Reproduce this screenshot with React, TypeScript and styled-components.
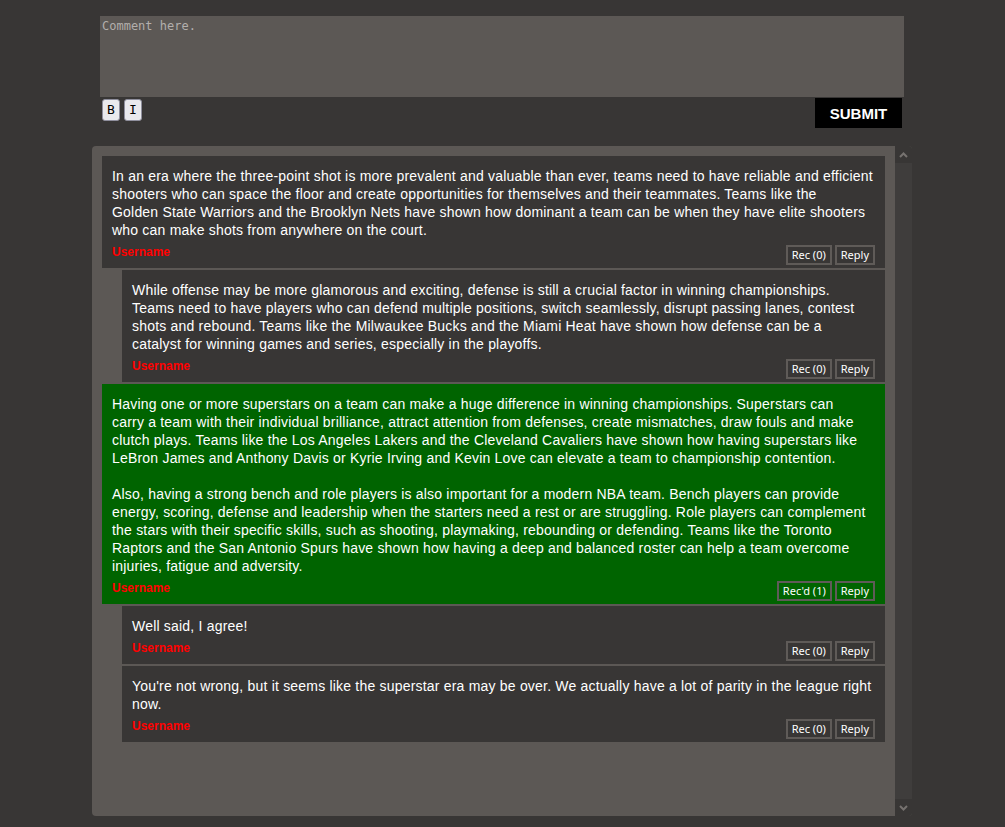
import React from 'react';
import styled, { createGlobalStyle } from 'styled-components';

const GlobalStyle = createGlobalStyle`
  html, body {
    margin: 0;
    padding: 0;
    background: #383635;
  }
  body {
    min-height: 100vh;
    font-family: "Liberation Sans", Arial, sans-serif;
  }
`;

const Wrapper = styled.div`
  width: 804px;
  margin: 16px 0 0 100px;
`;

const CommentInput = styled.textarea`
  display: block;
  box-sizing: border-box;
  width: 100%;
  height: 81px;
  margin: 0;
  padding: 3px 2px 2px;
  border: none;
  outline: none;
  resize: none;
  background: #5c5855;
  color: #e6e6e6;
  font: 12px/14px "DejaVu Sans Mono", monospace;
  &::placeholder {
    color: #b3afac;
  }
`;

const Toolbar = styled.div`
  display: flex;
  justify-content: space-between;
  align-items: flex-start;
  margin-top: 1px;
`;

const FormatGroup = styled.div`
  display: flex;
  gap: 4px;
  padding: 1px 0 0 2px;
`;

const FormatButton = styled.button`
  box-sizing: border-box;
  width: 18px;
  height: 22px;
  padding: 0;
  border: 1px solid #8f8f9d;
  border-radius: 3px;
  background: #e9e9ed;
  color: #000;
  font: 13px/20px "DejaVu Sans Mono", monospace;
`;

const SubmitButton = styled.button`
  width: 87px;
  height: 30px;
  margin-right: 2px;
  padding: 0;
  border: none;
  background: #000;
  color: #fff;
  font: bold 15px "Liberation Sans", Arial, sans-serif;
`;

const Panel = styled.div`
  display: flex;
  height: 670px;
  margin: 18px -8px 0;
  background: #5c5855;
  border-radius: 4px;
  overflow: hidden;
`;

const CommentList = styled.div`
  flex: 1;
  min-width: 0;
  display: flex;
  flex-direction: column;
  gap: 2px;
  padding: 10px;
`;

const ScrollTrack = styled.div`
  width: 17px;
  display: flex;
  flex-direction: column;
  justify-content: space-between;
  background: #3f3d3c;
`;

const ScrollButton = styled.div`
  height: 17px;
  display: flex;
  align-items: center;
  justify-content: center;
  background: #383635;
`;

const CommentBox = styled.div<{ $reply?: boolean; $highlight?: boolean }>`
  margin-left: ${(p) => (p.$reply ? '20px' : '0')};
  padding: 11px 10px 3px;
  background: ${(p) => (p.$highlight ? '#006400' : '#383635')};
  color: #fff;
  overflow: hidden;
`;

const CommentText = styled.p`
  margin: 0;
  font: 14px/18px "Liberation Sans", Arial, sans-serif;
  letter-spacing: 0.2px;
  white-space: pre;
`;

const CommentFooter = styled.div`
  display: flex;
  justify-content: space-between;
  align-items: flex-start;
  margin-top: 6px;
`;

const Username = styled.span`
  color: #ff0000;
  font: bold 12px/14px "Liberation Sans", Arial, sans-serif;
`;

const Actions = styled.div`
  display: flex;
  gap: 3px;
`;

const ActionButton = styled.button`
  box-sizing: border-box;
  height: 20px;
  padding: 0 4px;
  border: 2px solid #5f5b58;
  background: transparent;
  color: #fff;
  font: 11px/16px "Noto Sans", "Liberation Sans", sans-serif;
`;

type Comment = {
  lines: string[];
  reply?: boolean;
  highlight?: boolean;
  recLabel: string;
};

const comments: Comment[] = [
  {
    lines: [
      'In an era where the three-point shot is more prevalent and valuable than ever, teams need to have reliable and efficient',
      'shooters who can space the floor and create opportunities for themselves and their teammates. Teams like the',
      'Golden State Warriors and the Brooklyn Nets have shown how dominant a team can be when they have elite shooters',
      'who can make shots from anywhere on the court.',
    ],
    recLabel: 'Rec (0)',
  },
  {
    lines: [
      'While offense may be more glamorous and exciting, defense is still a crucial factor in winning championships.',
      'Teams need to have players who can defend multiple positions, switch seamlessly, disrupt passing lanes, contest',
      'shots and rebound. Teams like the Milwaukee Bucks and the Miami Heat have shown how defense can be a',
      'catalyst for winning games and series, especially in the playoffs.',
    ],
    reply: true,
    recLabel: 'Rec (0)',
  },
  {
    lines: [
      'Having one or more superstars on a team can make a huge difference in winning championships. Superstars can',
      'carry a team with their individual brilliance, attract attention from defenses, create mismatches, draw fouls and make',
      'clutch plays. Teams like the Los Angeles Lakers and the Cleveland Cavaliers have shown how having superstars like',
      'LeBron James and Anthony Davis or Kyrie Irving and Kevin Love can elevate a team to championship contention.',
      '',
      'Also, having a strong bench and role players is also important for a modern NBA team. Bench players can provide',
      'energy, scoring, defense and leadership when the starters need a rest or are struggling. Role players can complement',
      'the stars with their specific skills, such as shooting, playmaking, rebounding or defending. Teams like the Toronto',
      'Raptors and the San Antonio Spurs have shown how having a deep and balanced roster can help a team overcome',
      'injuries, fatigue and adversity.',
    ],
    highlight: true,
    recLabel: "Rec'd (1)",
  },
  {
    lines: ['Well said, I agree!'],
    reply: true,
    recLabel: 'Rec (0)',
  },
  {
    lines: [
      "You're not wrong, but it seems like the superstar era may be over. We actually have a lot of parity in the league right",
      'now.',
    ],
    reply: true,
    recLabel: 'Rec (0)',
  },
];

const Chevron = ({ up }: { up?: boolean }) => (
  <svg width="9" height="6" viewBox="0 0 9 6">
    <polyline
      points={up ? '1,5 4.5,1.5 8,5' : '1,1 4.5,4.5 8,1'}
      fill="none"
      stroke="#76726f"
      strokeWidth="2"
    />
  </svg>
);

export default function App() {
  return (
    <>
      <GlobalStyle />
      <Wrapper>
        <CommentInput placeholder="Comment here." />
        <Toolbar>
          <FormatGroup>
            <FormatButton>B</FormatButton>
            <FormatButton>I</FormatButton>
          </FormatGroup>
          <SubmitButton>SUBMIT</SubmitButton>
        </Toolbar>
        <Panel>
          <CommentList>
            {comments.map((c, i) => (
              <CommentBox key={i} $reply={c.reply} $highlight={c.highlight}>
                <CommentText>{c.lines.join('\n')}</CommentText>
                <CommentFooter>
                  <Username>Username</Username>
                  <Actions>
                    <ActionButton>{c.recLabel}</ActionButton>
                    <ActionButton>Reply</ActionButton>
                  </Actions>
                </CommentFooter>
              </CommentBox>
            ))}
          </CommentList>
          <ScrollTrack>
            <ScrollButton>
              <Chevron up />
            </ScrollButton>
            <ScrollButton>
              <Chevron />
            </ScrollButton>
          </ScrollTrack>
        </Panel>
      </Wrapper>
    </>
  );
}
